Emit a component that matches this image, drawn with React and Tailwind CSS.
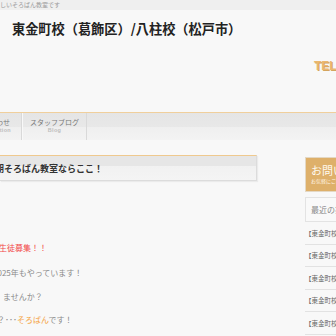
export default function App() {
  const posts = [
    "【東金町校】そろばん教室のお知らせ",
    "【東金町校】そろばん検定の結果",
    "【東金町校】春の体験会のご案内",
    "【東金町校】生徒募集のお知らせ",
    "【東金町校】夏期講習のご案内",
  ];
  return (
    <div className="w-[336px] h-[336px] overflow-hidden bg-[#f8f8f8] font-['Noto_Sans_CJK_JP',sans-serif]">
      <div className="h-[10px] bg-[#efefef] text-[6px] leading-[10px] text-[#9a9a9a] whitespace-nowrap">
        しいそろばん教室です
      </div>
      <header className="h-[102px] pt-[11px]">
        <div className="pl-[12px] text-[13.2px] leading-[15px] font-bold text-[#222] whitespace-nowrap">
          東金町校（葛飾区）/八柱校（松戸市）
        </div>
        <div className="mt-[24px] pl-[314px] text-[12px] leading-[12px] font-bold text-[#ebb870] whitespace-nowrap font-['Liberation_Sans',sans-serif] [text-shadow:1px_1px_0_#d4a55e]">
          TEL
        </div>
      </header>
      <div className="h-px bg-[#f0cf9c]" />
      <nav className="h-[27px] flex bg-[linear-gradient(#e5e5e5_0%,#e8e8e8_52%,#efefef_53%,#f3f3f3_100%)]">
        <div className="w-[22px] flex-none flex flex-col items-end pt-[4px] pr-[11px] border-r border-[#d9d9d9]">
          <div className="text-[7px] leading-[10px] text-[#777] whitespace-nowrap">お問い合わせ</div>
          <div className="text-[5.5px] leading-[7px] font-bold text-[#bdbdbd] whitespace-nowrap tracking-[0.3px] font-['Liberation_Sans',sans-serif] -mr-[1px]">
            Information
          </div>
        </div>
        <div className="w-[65px] flex-none flex flex-col items-center pt-[4px] border-r border-[#d9d9d9] border-l border-l-[#f8f8f8]">
          <div className="text-[7px] leading-[10px] text-[#777] whitespace-nowrap">スタッフブログ</div>
          <div className="text-[5.5px] leading-[7px] font-bold text-[#bdbdbd] whitespace-nowrap tracking-[0.3px] font-['Liberation_Sans',sans-serif]">
            Blog
          </div>
        </div>
      </nav>
      <div className="flex pt-[15px]">
        <main className="w-[257px] flex-none">
          <div className="h-[26px] border-t border-t-[#efc98e] border-r border-b border-[#dcdcdc] bg-[linear-gradient(#e6e6e6_0%,#e6e6e6_40%,#f1f1f1_41%,#f4f4f4_100%)] flex items-center shadow-[1px_1px_1px_rgba(0,0,0,0.05)]">
            <div className="-ml-[5px] pt-[1px] text-[9px] leading-[12px] font-bold text-[#333] whitespace-nowrap">
              期そろばん教室ならここ！
            </div>
          </div>
          <div className="mt-[61px] -ml-[1px] text-[8px] leading-[12px] text-[#f24848] whitespace-nowrap">
            生徒募集！！
          </div>
          <div className="mt-[13px] -ml-[7px] text-[8px] leading-[12px] text-[#8a8a8a] whitespace-nowrap">
            2025年もやっています！
          </div>
          <div className="mt-[12px] ml-[3px] text-[8px] leading-[12px] text-[#8a8a8a] whitespace-nowrap">
            ませんか？
          </div>
          <div className="mt-[11px] -ml-[3px] text-[8px] leading-[12px] text-[#8a8a8a] whitespace-nowrap">
            ？･･･<span className="text-[#f5a23c]">そろばん</span>です！
          </div>
        </main>
        <aside className="ml-[48px] w-[120px] flex-none pt-[2px]">
          <div className="h-[35px] border border-[#e4d8c4] bg-[#deb06a] pl-[5px] pt-[6px]">
            <div className="text-[11px] leading-[13px] text-[#fffaf0] whitespace-nowrap">お問い合わせ</div>
            <div className="text-[5px] leading-[8px] text-[#fff3e0] whitespace-nowrap">お気軽にご相談ください</div>
          </div>
          <div className="mt-[5px] h-[25px] border border-[#e3e3e3] bg-[#f9f9f9] flex items-center pl-[5px]">
            <div className="text-[8px] leading-[10px] text-[#888] whitespace-nowrap">最近の投稿</div>
          </div>
          {posts.map((p) => (
            <div key={p} className="h-[22.5px] border-b border-[#e2e2e2] flex items-center">
              <div className="text-[6.5px] leading-[8px] text-[#666] whitespace-nowrap">{p}</div>
            </div>
          ))}
        </aside>
      </div>
    </div>
  );
}
